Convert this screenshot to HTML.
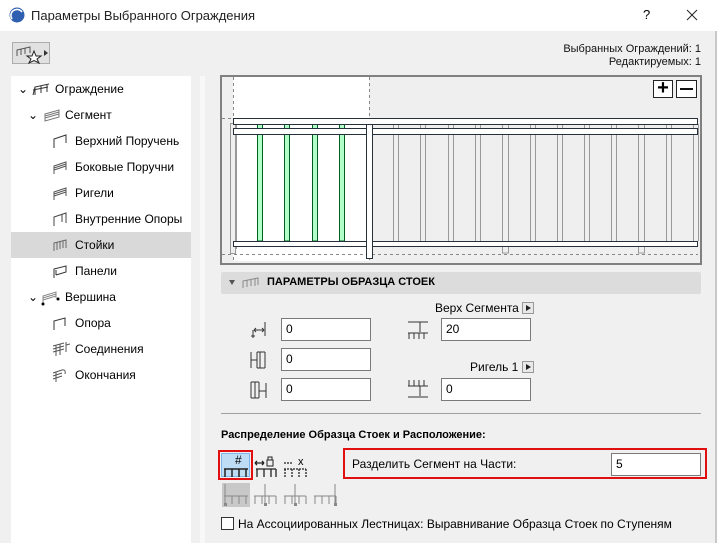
<!DOCTYPE html>
<html><head><meta charset="utf-8"><style>
*{margin:0;padding:0;box-sizing:border-box}
body{width:717px;height:543px;overflow:hidden;background:#f0f0f0;font-family:"Liberation Sans","DejaVu Sans",sans-serif;font-size:12px;color:#000;position:relative}
.a{position:absolute}
.title{left:0;top:0;width:717px;height:31px;background:#fff}
.tree div.it{position:absolute;height:26px;line-height:26px;font-size:12px}
.inp{position:absolute;background:#fff;border:1px solid #7a7a7a;height:23px;line-height:21px;padding-left:4px;font-size:12px}
.arrowbtn{display:inline-block;width:12px;height:12px;border:1px solid #999;background:#e8e8e8;vertical-align:-2px;position:relative}
.arrowbtn:after{content:"";position:absolute;left:3px;top:2px;border-left:5px solid #222;border-top:3.5px solid transparent;border-bottom:3.5px solid transparent}
</style></head><body>
<div class="a title"></div>
<svg class="a" style="left:9px;top:7px" width="16" height="16"><circle cx="8" cy="8" r="7.5" fill="#2f5fb0"/><path d="M3 12 A6 6 0 0 1 13 5" stroke="#fff" stroke-width="1.6" fill="none"/></svg>
<div class="a" style="left:31px;top:8px;font-size:13px;color:#222">Параметры Выбранного Ограждения</div>
<div class="a" style="left:643px;top:7px;font-size:13px">?</div>
<svg class="a" style="left:686px;top:9px" width="12" height="12"><path d="M1 1 L11 11 M11 1 L1 11" stroke="#222" stroke-width="1"/></svg>

<div class="a" style="left:12px;top:42px;width:38px;height:22px;border:1px solid #adadad;background:#e1e1e1"></div>
<svg class="a" style="left:14px;top:44px" width="36" height="20"><path d="M3 12 L3 6 L16 3 L16 9 M3 6 L16 3 M7 5 V11 M11 4 V10" stroke="#555" fill="none"/><path d="M20 7 L22 12 L27 12 L23 15 L25 19 L20 16.5 L15 19 L17 15 L13 12 L18 12Z" stroke="#222" fill="#fff"/><path d="M30 6 L34 9 L30 12Z" fill="#333"/></svg>

<div class="a" style="left:540px;top:43px;width:161px;text-align:right;font-size:11px;line-height:13px;color:#111">Выбранных Ограждений: 1<br>Редактируемых: 1</div>

<div class="a" style="left:11px;top:76px;width:180px;height:467px;background:#fff"></div>
<div class="a" style="left:200px;top:76px;width:5px;height:467px;background:#f8f8f8"></div>
<div class="a" style="left:11px;top:232px;width:180px;height:26px;background:#d9d9d9"></div>

<div class="tree">
<div class="it" style="left:18px;top:76px">⌄</div>
<svg class="a" style="left:32px;top:82px" width="18" height="14"><path d="M1 13 L3 5 L17 2 M3 5 V13 M9 4 V11 M15 3 V10 M1 8 L16 5" stroke="#333" fill="none"/></svg>
<div class="it" style="left:55px;top:76px">Ограждение</div>
<div class="it" style="left:28px;top:102px">⌄</div>
<svg class="a" style="left:43px;top:108px" width="18" height="14"><path d="M2 6 L16 2 V9 L2 13 Z M2 8 L16 4 M2 10 L16 6" stroke="#777" fill="none"/></svg>
<div class="it" style="left:65px;top:102px">Сегмент</div>

<svg class="a" style="left:52px;top:134px" width="16" height="14"><path d="M2 14 V5 L14 1 V9" stroke="#333" fill="none"/></svg>
<div class="it" style="left:75px;top:128px">Верхний Поручень</div>
<svg class="a" style="left:52px;top:160px" width="16" height="14"><path d="M2 14 V6 L14 2 V10 M2 8 L14 4 M2 10 L14 6" stroke="#555" fill="none"/></svg>
<div class="it" style="left:75px;top:154px">Боковые Поручни</div>
<svg class="a" style="left:52px;top:186px" width="16" height="14"><path d="M2 14 V6 L14 2 V10 M2 8 L14 4 M2 10 L14 6" stroke="#555" fill="none"/></svg>
<div class="it" style="left:75px;top:180px">Ригели</div>
<svg class="a" style="left:52px;top:212px" width="16" height="14"><path d="M2 14 V5 L14 1 V11 M10 3 V10" stroke="#444" fill="none"/></svg>
<div class="it" style="left:75px;top:206px">Внутренние Опоры</div>
<svg class="a" style="left:52px;top:238px" width="16" height="14"><path d="M2 13 V5 L14 2 V10 M5 4 V12 M8 3 V11 M11 3 V10" stroke="#666" fill="none"/></svg>
<div class="it" style="left:75px;top:232px">Стойки</div>
<svg class="a" style="left:52px;top:264px" width="16" height="14"><path d="M2 14 V5 L14 2 V8 L4 11 M4 11 V6" stroke="#333" fill="none"/></svg>
<div class="it" style="left:75px;top:258px">Панели</div>
<div class="it" style="left:28px;top:284px">⌄</div>
<svg class="a" style="left:40px;top:288px" width="20" height="18"><path d="M3 16 V8 L16 4 V10 M3 10 L16 6 M3 12 L16 8" stroke="#888" fill="none"/><circle cx="3" cy="16" r="1.5"/><circle cx="18" cy="11" r="1.5"/></svg>
<div class="it" style="left:65px;top:284px">Вершина</div>
<svg class="a" style="left:52px;top:316px" width="16" height="14"><path d="M2 14 V5 L13 2 V10" stroke="#333" fill="none"/></svg>
<div class="it" style="left:75px;top:310px">Опора</div>
<svg class="a" style="left:52px;top:341px" width="18" height="16"><path d="M1 5 L12 2 M1 8 L12 5 M1 11 L12 8 M4 4 V15 M8 3 V14 M14 1 V11 M14 4 L18 3" stroke="#555" fill="none"/></svg>
<div class="it" style="left:75px;top:336px">Соединения</div>
<svg class="a" style="left:52px;top:367px" width="16" height="16"><path d="M1 6 L10 3 M1 9 L10 6 M1 12 L10 9 M4 5 V15 M10 3 Q14 2 13 7" stroke="#555" fill="none"/></svg>
<div class="it" style="left:75px;top:362px">Окончания</div>
</div>

<!-- preview -->
<svg class="a" style="left:220px;top:75px" width="482" height="190">
<rect x="1" y="1" width="480" height="188" fill="#efefef" stroke="#808080" stroke-width="2"/>
<rect x="13" y="2" width="136" height="184" fill="#fff"/>
<g stroke="#888" stroke-dasharray="3,3" fill="none"><path d="M13.5 2 V185 M149.5 2 V185 M2 43.5 H13 M2 179.5 H478"/></g>
<g fill="#efefef" stroke="#999"><rect x="10.5" y="48.5" width="5" height="130"/></g>
<g stroke="#999" fill="none">
<path d="M173.5 49 V166 M178.5 49 V166 M200.5 49 V166 M205.5 49 V166 M228.5 49 V166 M233.5 49 V166 M255.5 49 V166 M260.5 49 V166 M419.5 49 V166 M424.5 49 V166 M446.5 49 V166 M451.5 49 V166 M473.5 49 V166 M478.5 49 V166 M337.5 49 V166 M342.5 49 V166 M364.5 49 V166 M369.5 49 V166 M391.5 49 V166 M396.5 49 V166 M310.5 49 V166 M315.5 49 V166"/>
<rect x="282.5" y="49" width="6" height="129" fill="#efefef"/>
<rect x="418.5" y="49" width="6" height="129" fill="#efefef"/>
<path d="M16.5 49 V174"/>
</g>
<g fill="#b3ffc9" stroke="#006020"><rect x="37.5" y="49" width="5" height="117"/><rect x="64.5" y="49" width="5" height="117"/><rect x="92.5" y="49" width="5" height="117"/><rect x="119.5" y="49" width="5" height="117"/></g>
<g stroke="#25303a" fill="#fff">
<rect x="13.5" y="43.5" width="464" height="6"/>
<rect x="13.5" y="53.5" width="464" height="6"/>
<rect x="13.5" y="166.5" width="464" height="5"/>
<rect x="146.5" y="49.5" width="6" height="134"/>
</g>
</svg>
<div class="a" style="left:653px;top:80px;width:20px;height:18px;border:1px solid #222;background:#fff;text-align:center;line-height:15px;font-size:20px;font-weight:bold">+</div>
<div class="a" style="left:676px;top:80px;width:21px;height:18px;border:1px solid #222;background:#fff"><div class="a" style="left:3px;top:7px;width:13px;height:2px;background:#111"></div></div>

<!-- section header -->
<div class="a" style="left:221px;top:272px;width:480px;height:22px;background:#dcdcdc;border-radius:2px"></div>
<div class="a" style="left:229px;top:280px;border-top:5px solid #555;border-left:3.5px solid transparent;border-right:3.5px solid transparent"></div>
<svg class="a" style="left:242px;top:276px" width="20" height="14"><path d="M1 12 V5 L16 2 V9 M5 4 V11 M9 3 V10 M13 3 V10" stroke="#888" fill="none"/></svg>
<div class="a" style="left:267px;top:276px;font-weight:bold;font-size:11px">ПАРАМЕТРЫ ОБРАЗЦА СТОЕК</div>

<div class="a" style="left:435px;top:301px;font-size:12px">Верх Сегмента <span class="arrowbtn"></span></div>
<div class="a" style="left:470px;top:360px;font-size:12px">Ригель 1 <span class="arrowbtn"></span></div>

<svg class="a" style="left:248px;top:318px" width="22" height="22"><path d="M17 4 V18 M6 12 H16 M6 12 L8 10 M6 12 L8 14 M16 12 L14 10 M16 12 L14 14 M5 12 V20 M3 18 H7" stroke="#333" fill="none" stroke-width="1"/></svg>
<div class="inp" style="left:281px;top:318px;width:90px">0</div>
<svg class="a" style="left:248px;top:348px" width="22" height="22"><path d="M3 4 V20 M3 12 H9 M9 4 V20 M12 4 V20 M17 4 V20 M9 4 H17 M9 20 H17" stroke="#333" fill="none"/></svg>
<div class="inp" style="left:281px;top:348px;width:90px">0</div>
<svg class="a" style="left:248px;top:378px" width="22" height="22"><path d="M3 4 V20 M7 4 V20 M11 4 V20 M3 4 H11 M3 20 H11 M11 13 H18 M18 5 V20" stroke="#333" fill="none"/></svg>
<div class="inp" style="left:281px;top:378px;width:90px">0</div>

<svg class="a" style="left:406px;top:318px" width="24" height="22"><path d="M2 4 H22 M14 4 V14 M2 15 H22 M3 15 V21 M8 15 V21 M13 15 V21 M18 15 V21" stroke="#333" fill="none"/></svg>
<div class="inp" style="left:441px;top:318px;width:90px">20</div>
<svg class="a" style="left:406px;top:378px" width="24" height="22"><path d="M3 2 V8 M8 2 V8 M13 2 V8 M18 2 V8 M2 8 H22 M14 8 V18 M2 19 H22" stroke="#333" fill="none"/></svg>
<div class="inp" style="left:441px;top:378px;width:90px">0</div>

<div class="a" style="left:221px;top:413px;width:480px;height:1px;background:#a0a0a0"></div>
<div class="a" style="left:221px;top:429px;font-weight:bold;font-size:11px">Распределение Образца Стоек и Расположение:</div>

<div class="a" style="left:218px;top:450px;width:35px;height:30px;border:2px solid #e01010"></div>
<div class="a" style="left:221px;top:453px;width:29px;height:24px;background:#bfdcf5;border:1px solid #7eb4ea"></div>
<svg class="a" style="left:220px;top:452px" width="120" height="30"><text x="15" y="12" font-size="12" font-family="Liberation Sans">#</text><path d="M4 17 H28 M5 17 V25 M12 17 V25 M19 17 V25 M26 17 V25" stroke="#222" fill="none" stroke-width="1.5"/>
<path d="M36 17 H56 M37 17 V25 M44 17 V25 M51 17 V25 M56 17 V25 M35 11 H44 M35 11 L37 9 M35 11 L37 13 M44 11 L42 9 M44 11 L42 13" stroke="#222" fill="none" stroke-width="1.3"/><rect x="47" y="8" width="6" height="6" fill="none" stroke="#222"/><path d="M48 8 V5 H52 V8" stroke="#222" fill="none"/>
<path d="M64 17 H86 M65 17 V25 M72 17 V25 M79 17 V25 M86 17 V25 M64 11 H73" stroke="#222" fill="none" stroke-width="1.3" stroke-dasharray="2,1"/><text x="78" y="13" font-size="11" font-family="Liberation Sans">x</text></svg>
<div class="a" style="left:222px;top:483px;width:28px;height:24px;background:#c8c8c8"></div>
<svg class="a" style="left:220px;top:482px" width="120" height="26"><g stroke="#888" fill="none"><path d="M4 14 H28 M5 14 V22 M12 14 V22 M19 14 V22 M26 14 V22 M5 2 V14"/><path d="M34 14 H56 M35 14 V22 M42 14 V22 M49 14 V22 M56 14 V22 M45 2 V22"/><path d="M64 14 H86 M65 14 V22 M72 14 V22 M79 14 V22 M86 14 V22 M75 2 V22"/><path d="M94 14 H116 M95 14 V22 M102 14 V22 M109 14 V22 M116 14 V22 M115 2 V22"/></g><g fill="#888"><rect x="4" y="21" width="3" height="3"/><rect x="44" y="21" width="3" height="3"/><rect x="74" y="21" width="3" height="3"/><rect x="114" y="21" width="3" height="3"/></g></svg>

<div class="a" style="left:343px;top:448px;width:364px;height:31px;border:2px solid #e01010"></div>
<div class="a" style="left:352px;top:457px;font-size:12px">Разделить Сегмент на Части:</div>
<div class="inp" style="left:611px;top:453px;width:90px">5</div>

<div class="a" style="left:221px;top:517px;width:13px;height:13px;border:1px solid #333;background:#fff"></div>
<div class="a" style="left:238px;top:517px;font-size:12px">На Ассоциированных Лестницах: Выравнивание Образца Стоек по Ступеням</div>
<div class="a" style="left:715px;top:31px;width:2px;height:512px;background:#c8c8c8"></div>
</body></html>
